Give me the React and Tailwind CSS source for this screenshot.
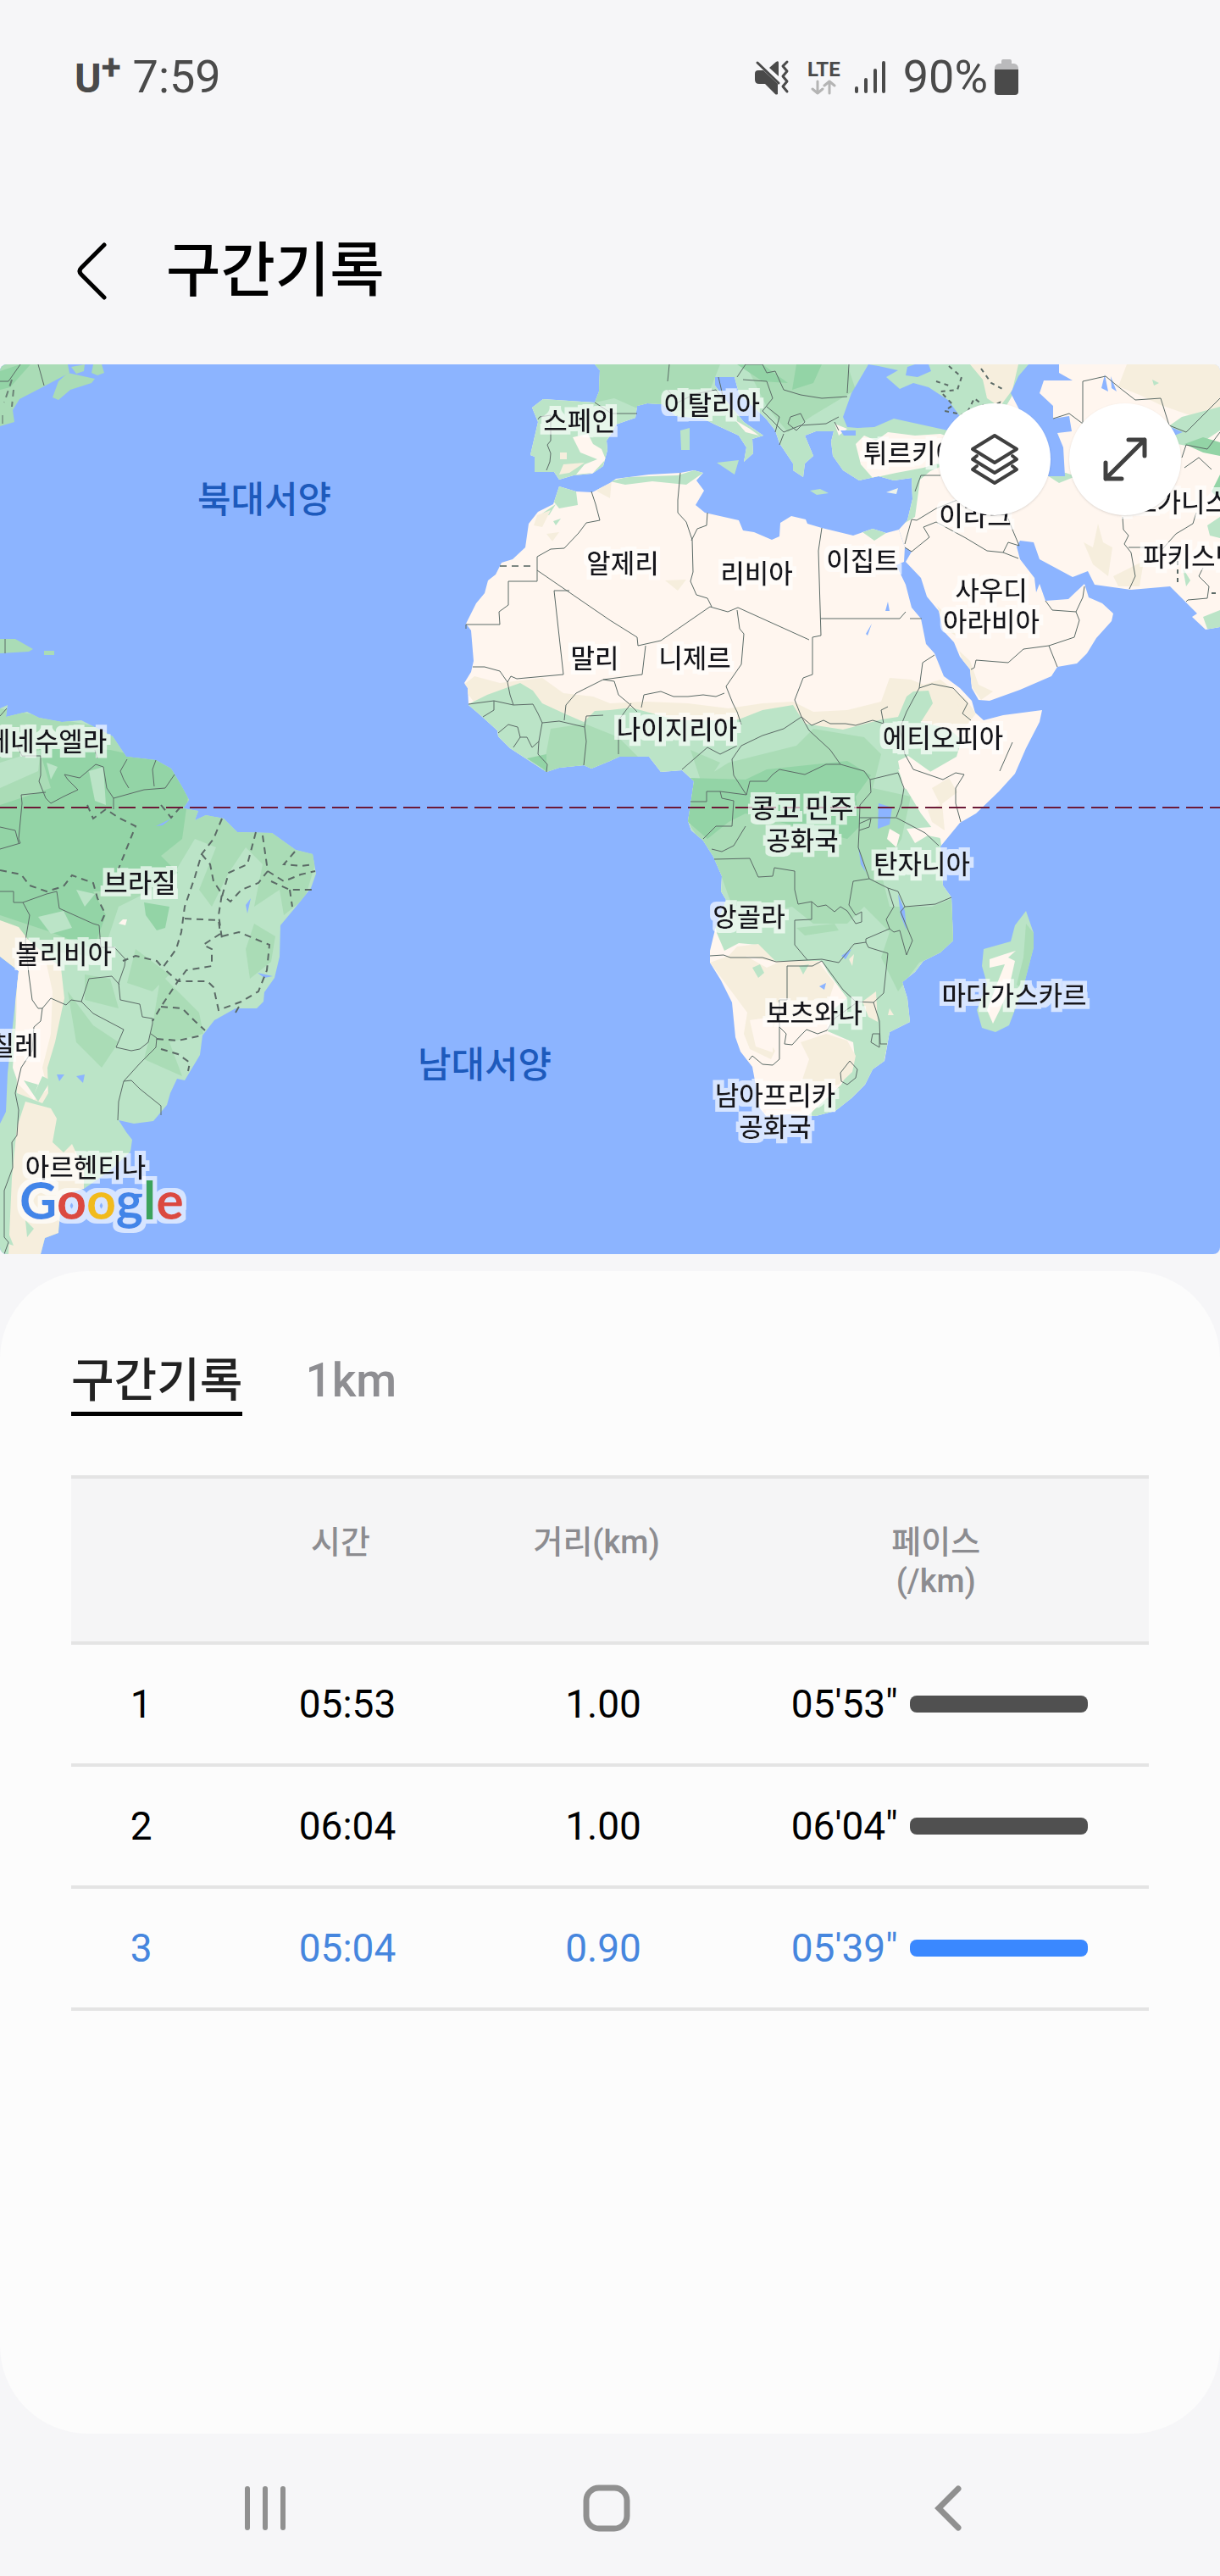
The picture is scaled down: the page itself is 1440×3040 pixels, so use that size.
const KR = "font-['Roboto','Noto_Sans_CJK_KR',sans-serif]";

const laps = [
    {no: 1, time: "05:53", distance: "1.00", pace: "05'53\"", current: false},
    {no: 2, time: "06:04", distance: "1.00", pace: "06'04\"", current: false},
    {no: 3, time: "05:04", distance: "0.90", pace: "05'39\"", current: true},
];

// x and y are the centre of the label in map units
const labels = [
    {text: "스페인", x: 684, y: 66},
    {text: "이탈리아", x: 840, y: 47},
    {text: "튀르키예", x: 1076, y: 104},
    {text: "이라크", x: 1151, y: 178},
    {text: "아프가니스탄", x: 1394, y: 162},
    {text: "파키스탄", x: 1406, y: 226},
    {text: "알제리", x: 735, y: 234},
    {text: "리비아", x: 893, y: 246},
    {text: "이집트", x: 1018, y: 231},
    {text: "사우디", x: 1170, y: 266},
    {text: "아라비아", x: 1170, y: 303},
    {text: "말리", x: 702, y: 346},
    {text: "니제르", x: 820, y: 346},
    {text: "나이지리아", x: 799, y: 430},
    {text: "에티오피아", x: 1113, y: 440},
    {text: "베네수엘라", x: 55, y: 444},
    {text: "브라질", x: 165, y: 611},
    {text: "볼리비아", x: 75, y: 695},
    {text: "칠레", x: 17, y: 803},
    {text: "아르헨티나", x: 101, y: 947},
    {text: "콩고 민주", x: 947, y: 523},
    {text: "공화국", x: 947, y: 561},
    {text: "탄자니아", x: 1088, y: 589},
    {text: "앙골라", x: 884, y: 651},
    {text: "보츠와나", x: 961, y: 765},
    {text: "마다가스카르", x: 1197, y: 744},
    {text: "남아프리카", x: 915, y: 862},
    {text: "공화국", x: 915, y: 899},
];

function StatusBar() {
    return (
        <div className="flex items-center justify-between pt-14 pl-[88px] pr-[238px] text-[#4a4a4a]">
            <div className="flex items-center gap-3.5">
                <div className="flex items-start text-5xl leading-[60px] font-bold">
                    <span className="pt-1">U</span>
                    <span className="text-[42px] leading-[42px]">+</span>
                </div>
                <time className="text-[54px] leading-[70px]">7:59</time>
            </div>
            <div className="flex items-center">
                <svg width="42" height="42" viewBox="0 0 42 42" fill="currentColor" role="img" aria-label="진동">
                    <path d="M0 17Q0 13 4 13H10L27 29V41Q25 42 24 41L12 29H5Q0 29 0 24Z"/>
                    <path d="M17 10L25 3Q28 1 28 4V20Z"/>
                    <path d="M3 4L28 28" fill="none" stroke="currentColor" strokeWidth="3" strokeLinecap="round"/>
                    <path d="M38 3L33 8L38 14L33 20L38 26L33 32L38 38" fill="none" stroke="currentColor"
                          strokeWidth="3" strokeLinecap="round" strokeLinejoin="round"/>
                </svg>
                <div className="ml-5 flex flex-col items-center">
                    <span className="text-2xl leading-6 font-bold">LTE</span>
                    <svg width="30" height="18" viewBox="0 0 30 18" fill="none" stroke="#b4b4b4" strokeWidth="3"
                         strokeLinecap="round" strokeLinejoin="round" aria-hidden="true">
                        <path d="M8 2V16M2 11L8 16L14 11"/>
                        <path d="M22 16V2M16 7L22 2L28 7"/>
                    </svg>
                </div>
                <svg className="ml-4" width="38" height="42" viewBox="0 0 38 42" stroke="currentColor" strokeWidth="4"
                     strokeLinecap="round" role="img" aria-label="신호">
                    <path d="M3 34V38M14 24V38M25 13V38M35 4V38"/>
                </svg>
                <span className="ml-5 text-[54px] leading-[70px]">90%</span>
                <svg className="ml-2" width="28" height="44" viewBox="0 0 28 44" aria-hidden="true">
                    <path d="M8 6V3Q8 1 10 1H18Q20 1 20 3V6H23Q28 7 28 12V20H0V12Q0 7 5 6Z" fill="#bababc"/>
                    <path d="M0 13H28V39Q28 43 24 43H4Q0 43 0 39Z" fill="currentColor"/>
                </svg>
            </div>
        </div>
    );
}

function Header() {
    return (
        <header className="flex items-center gap-[70px] pt-[154px] pb-[70px] pl-[90px]">
            <button type="button" aria-label="뒤로">
                <svg width="36" height="68" viewBox="0 0 36 68" fill="none" stroke="#000" strokeWidth="5"
                     strokeLinecap="round" strokeLinejoin="round">
                    <path d="M33 3L6 30Q2 34 6 38L33 65"/>
                </svg>
            </button>
            <h1 className="text-[70px] leading-[80px] font-medium text-black">구간기록</h1>
        </header>
    );
}

function WorldMap() {
    return (
        <svg viewBox="0 0 1440 1050" className="block w-full" role="img" aria-label="지도">
            <defs>
                <filter id="halo" x="-20%" y="-40%" width="140%" height="180%">
                    <feMorphology in="SourceAlpha" operator="dilate" radius="5" result="wide"/>
                    <feFlood floodColor="#fff" floodOpacity="0.65"/>
                    <feComposite in2="wide" operator="in" result="glow"/>
                    <feMerge>
                        <feMergeNode in="glow"/>
                        <feMergeNode in="SourceGraphic"/>
                    </feMerge>
                </filter>
                <clipPath id="africa-clip">
                    <path d="M660 144L680 150 699 151 720 140 727 135 766 130 803 128 819 125 830 128 822 137 831 149 821 166 832 175 872 184 877 196 890 198 911 207 920 203 921 187 934 179 951 183 953 188 970 193 1007 202 1030 194 1046 199 1061 195 1068 216 1067 233 1058 237 1069 260 1076 287 1087 300 1093 330 1103 341 1114 368 1133 382 1147 397 1151 411 1161 420 1184 414 1230 408 1227 422 1211 453 1198 483 1179 504 1152 530 1133 541 1110 569 1113 615 1123 629 1125 680 1110 694 1090 704 1080 717 1065 729 1071 748 1074 776 1050 788 1044 822 1030 832 1021 850 1005 866 986 881 963 887 931 885 904 887 897 878 888 829 874 811 868 794 864 753 851 727 838 706 838 692 844 667 857 632 851 622 852 604 842 581 830 562 816 550 812 539 815 520 819 492 805 479 780 481 766 463 731 463 720 468 698 477 689 473 660 476 645 481 602 453 588 439 587 432 567 414 553 402 552 382 548 376 556 363 559 350 556 314 550 306 562 282 572 270 576 255 585 248 592 234 605 230 620 216 624 188 635 174 653 165Z"/>
                </clipPath>
                <clipPath id="america-clip">
                    <path d="M0 406L9 402 7 416 32 410 46 417 73 422 96 420 133 439 149 463 184 467 202 477 214 497 223 514 216 524 234 527 230 538 243 532 264 536 280 552 321 553 349 573 369 578 373 601 367 618 351 638 331 662 330 699 324 724 312 741 311 752 303 760 278 760 253 774 239 792 236 815 218 845 209 843 201 860 197 874 181 893 158 896 140 892 149 906 156 915 154 929 129 952 99 973 73 980 69 1025 53 1031 48 1050 0 1050 0 896 7 882 9 836 17 762 22 716 0 699Z"/>
                </clipPath>
                <clipPath id="eurasia-clip">
                    <path d="M702 0L708 7 707 32 702 45 641 41 628 51 635 68 626 107 631 109 631 127 654 127 660 136 677 131 699 129 712 120 717 101 716 90 722 81 727 71 750 63 752 49 764 46 782 47 798 61 830 64 844 71 872 84 881 98 878 115 889 105 888 88 901 84 878 68 858 44 844 25 844 15 867 15 872 34 904 64 915 78 920 93 936 117 936 125 948 133 950 117 960 108 950 84 963 79 984 79 981 91 983 108 995 125 1014 137 1037 132 1055 137 1076 134 1077 159 1071 184 1061 195 1068 216 1076 221 1069 233 1087 252 1094 274 1108 291 1113 314 1126 328 1133 345 1145 360 1147 382 1155 396 1168 397 1204 384 1241 368 1248 357 1271 353 1283 341 1294 323 1312 303 1314 294 1301 282 1285 275 1280 259 1261 277 1234 279 1227 259 1223 269 1221 252 1204 230 1200 215 1204 208 1220 210 1227 230 1266 251 1284 244 1292 260 1335 266 1381 262 1400 281 1413 294 1407 298 1423 313 1440 310V0Z"/>
                </clipPath>
            </defs>

            <rect width="1440" height="1050" fill="#8cb4ff"/>

            {/* North America and the Caribbean */}
            <g fill="#aadcb6">
                <path d="M0 0H80L82 10 50 27 23 41 15 54 17 68 0 73Z"/>
                <path d="M80 10L112 17 108 22 83 30 69 42 62 39 69 20Z"/>
                <path d="M84 3L100 0 99 8 90 11ZM110 0H120L123 10 115 13 108 10Z"/>
                <path d="M0 324H18L39 336 34 339 0 341ZM52 338H64V343H52Z"/>
            </g>
            <path d="M0 8L24 0H36L12 27 0 30Z" fill="#93d4a6"/>

            {/* Europe, the Middle East and Asia */}
            <g clipPath="url(#eurasia-clip)">
                <rect x="600" width="840" height="420" fill="#fff6ef"/>
                <path d="M600 0H1214L1193 40 1180 62 1160 76 1145 90 1130 112 1098 126 1086 136 1080 180 1060 192 900 140 780 60 722 90 710 125 655 140 620 130Z" fill="#bbe4c7"/>
                <path d="M680 0H850L830 50 770 60 725 40 702 45ZM880 0H1000L1010 30 960 60 930 80 905 50Z" fill="#aadcb6"/>
                <path d="M870 0H900L930 22 900 20ZM940 0H970L960 22 935 30Z" fill="#93d4a6"/>
                <path d="M676 86L694 82 700 94 710 100 715 112 700 128 680 130 690 118 705 112 685 104Z" fill="#fff6ef"/>
                <path d="M665 118L690 116 672 128 660 130ZM661 104H669V112H661Z" fill="#f6eedd"/>
                <path d="M1010 94L1020 84 1034 90 1048 80 1080 84 1110 82 1140 92 1130 110 1090 122 1058 128 1030 134 1016 118ZM985 70L1000 76 990 84Z" fill="#fff6ef"/>
                <path d="M1145 0H1202L1195 30 1180 50 1165 40 1160 18Z" fill="#f6eedd"/>
                <path d="M868 66L885 76 896 84 880 80Z" fill="#fff6ef"/>
                <path d="M1236 131L1258 128 1270 132 1250 140Z" fill="#bbe4c7"/>
                <path d="M1330 0H1440V56L1410 62 1370 48 1345 36 1320 26Z" fill="#f6eedd"/>
                <path d="M1360 18L1368 22 1362 25ZM1378 74L1395 62 1440 50V78L1425 88 1400 96 1380 92Z" fill="#bbe4c7"/>
                <path d="M1398 94L1420 86 1440 92V108L1420 104ZM1440 130L1430 150 1440 160Z" fill="#93d4a6"/>
                <path d="M1296 188L1302 210 1313 216 1308 250 1290 236 1279 210 1290 216ZM1314 250L1350 232 1345 262 1320 262Z" fill="#f6eedd"/>
                <path d="M1425 190L1440 180V205L1428 202ZM1396 240L1405 255 1400 262ZM1420 298L1440 290V312L1425 312Z" fill="#bbe4c7"/>
                <path d="M1132 338L1145 350 1155 378 1172 386 1158 396 1148 382ZM1106 285L1118 296 1128 320 1115 312Z" fill="#f6eedd"/>
            </g>
            <g fill="#8cb4ff">
                <path d="M1018 12L1005 34 995 62 1000 74 1012 75 1032 74 1055 64 1087 71 1119 78 1135 64 1119 42 1096 27 1078 22 1062 29 1046 15 1060 7 1037 2 1025 0Z"/>
                <path d="M1071 3L1080 0H1096L1099 8 1083 15 1069 13Z"/>
                <path d="M1214 0H1250V10L1266 19 1232 19 1227 34 1243 49 1243 64 1262 61 1265 79 1248 81 1255 98 1257 132 1237 132 1220 101 1207 61 1193 34 1202 14Z"/>
                <path d="M992 78H1010V84H996ZM1300 28L1304 12 1308 32ZM1311 14L1318 32 1312 28ZM1382 74L1396 80 1386 84Z"/>
            </g>
            <g fill="#bbe4c7">
                <path d="M803 78L814 75V101L804 101ZM846 116L872 113 867 130ZM956 149L968 147 978 152 964 154Z"/>
                <path d="M1046 151L1060 146 1058 153Z" fill="#eef3ea"/>
                <path d="M1211 645L1220 671V688L1207 738 1191 780 1175 788 1159 783 1153 762 1165 731 1159 710 1161 690 1193 681 1198 662Z"/>
            </g>
            <path d="M1211 660L1220 671V688L1207 738 1200 732 1208 700Z" fill="#aadcb6"/>
            <path d="M1168 702L1186 696 1199 692 1190 700 1198 704 1190 740 1180 762 1172 778 1165 762 1178 728 1186 708 1168 712Z" fill="#fff6ef"/>

            {/* Africa */}
            <g clipPath="url(#africa-clip)">
                <rect x="540" y="120" width="700" height="780" fill="#fff6ef"/>
                <path d="M655 140L680 150 682 166 660 170 652 160ZM640 176L656 165 648 178ZM653 185L662 182 656 190Z" fill="#bbe4c7"/>
                <path d="M720 138L740 133 800 131 822 124 830 128 810 142 770 138 738 142Z" fill="#bbe4c7"/>
                <path d="M1018 198L1030 192 1046 199 1032 208Z" fill="#bbe4c7"/>
                <path d="M706 140L722 136 720 158 705 150ZM634 178L650 172 640 192 630 190ZM645 200L660 198 652 209ZM785 255L810 254 800 267Z" fill="#f6eedd"/>
                <path d="M545 380L560 368 590 376 640 370 665 388 700 392 720 400 760 398 812 400 860 406 900 400 936 398 960 410 1000 408 1040 398 1050 370 1075 372 1090 378 1110 372 1140 395 1152 412 1130 440 1060 450 600 450Z" fill="#f6eedd"/>
                <path d="M553 401L575 390 597 382 614 376 629 385 640 400 666 412 689 422 702 409 720 408 745 405 800 420 850 420 872 419 900 408 936 402 950 424 995 431 1041 419 1060 416 1070 392 1078 386 1096 385 1101 400 1087 422 1120 430 1135 443 1129 463 1096 482 1060 478 1069 500 1087 530 1110 560 1115 600 1140 640 1120 700 1080 720 1080 780 1050 790 1040 840 986 890 950 890 993 850 1009 818 1007 800 977 787 985 760 1000 748 977 717 970 704 913 704 894 685 872 683 855 692 846 671 830 600 800 500 600 480 540 420Z" fill="#bbe4c7"/>
                <path d="M650 430L690 424 730 440 760 470 700 480 640 484ZM860 470L940 450 960 430 1020 440 1040 460 1030 500 1075 510 1064 560 1040 600 1050 640 1100 640 1125 630 1125 690 1085 706 1060 740 1040 700 1050 670 1020 640 1000 660 960 660 935 640 870 655 850 600 815 545 812 500ZM940 665L985 660 990 668 950 674ZM815 455L850 470 830 500Z" fill="#aadcb6"/>
                <path d="M812 488L880 490 905 478 1000 468 1028 485 1010 510 1015 545 1000 560 880 530 860 540 835 560 812 540ZM622 465L645 460 645 480Z" fill="#93d4a6"/>
                <path d="M1060 468L1072 462 1100 482 1130 480 1145 494 1150 512 1132 540 1100 530 1085 505 1066 500ZM1050 548L1062 555 1058 570 1047 560ZM1070 548L1100 546 1115 560 1095 556 1080 565Z" fill="#fff6ef"/>
                <path d="M1100 500L1120 488 1130 505 1110 520ZM1095 526L1112 518 1115 550 1100 540ZM1120 420L1128 400 1140 410Z" fill="#f6eedd"/>
                <path d="M870 687L895 684 915 704 965 704 985 730 975 760 960 775 920 770 905 795 915 810 910 820 885 808 878 790 882 765 850 722 838 706 860 698ZM975 790L1000 798 1010 816 1006 835 990 850 960 856 945 850 955 820 945 800Z" fill="#f6eedd"/>
                <path d="M880 698L918 706 905 712ZM885 774L912 770 912 812 892 805Z" fill="#fff6ef"/>
                <path d="M888 712L897 708 902 718 895 724ZM943 710L955 708 948 720Z" fill="#bbe4c7"/>
                <path d="M1018 752L1034 740 1036 776 1025 770ZM1050 760L1055 768H1048ZM1002 702L1008 696 1006 710Z" fill="#f6eedd"/>
            </g>
            <path d="M1037 518L1053 523 1050 543 1036 548ZM1013 568L1022 600 1026 606 1016 590ZM1060 625L1068 645 1070 668 1063 650ZM993 698L1005 690 998 702ZM967 734L975 730 973 738ZM1048 280L1050 291H1045ZM1022 318L1029 306 1024 320Z" fill="#8cb4ff"/>

            {/* South America */}
            <g clipPath="url(#america-clip)">
                <rect y="400" width="380" height="650" fill="#bbe4c7"/>
                <path d="M0 406L130 430 240 520 320 550 375 580 360 630 335 650 330 620 300 640 310 590 290 570 270 600 250 640 235 620 255 570 230 560 200 610 140 640 120 700 40 690 0 660Z" fill="#aadcb6"/>
                <path d="M45 450L130 455 200 470 222 510 215 560 190 580 210 600 175 620 110 622 125 650 110 690 60 670 0 650V520L60 500ZM170 635L200 640 195 665 185 668 172 650Z" fill="#93d4a6"/>
                <path d="M0 470L48 455 45 480 0 500ZM105 480L122 475 125 520 112 515 108 495ZM55 470L68 475 60 490ZM90 620L112 625 100 640ZM45 652L75 645 85 665 60 672Z" fill="#bbe4c7"/>
                <path d="M300 660L325 675 320 705 295 725 290 690ZM160 690L200 720 180 740 150 730ZM80 740L110 780 140 800 120 830 90 800ZM190 720L235 765 240 790 200 800 215 840 170 820 180 780ZM100 720L130 725 140 760 100 750Z" fill="#aadcb6"/>
                <path d="M0 656L22 664 34 680 72 712 76 748 65 800 56 830 57 860 50 872 20 860 18 740 22 716 0 699Z" fill="#f6eedd"/>
                <path d="M20 700L55 708 62 740 60 790 50 830 56 856 40 868 22 850 15 830 20 760Z" fill="#fff6ef"/>
                <path d="M30 870L60 878 67 890 62 918 75 930 85 920 99 950 99 973 73 980 69 1025 48 1050H10L14 960 20 900Z" fill="#f6eedd"/>
                <path d="M28 845L45 850 40 862 50 840 60 845 45 870ZM30 1010L40 1020 32 1030ZM8 1020L16 1040 4 1036Z" fill="#bbe4c7"/>
                <path d="M145 655L150 655 148 662 140 660Z" fill="#fff6ef"/>
            </g>
            <path d="M67 838L76 838 70 846ZM90 840L100 838 98 848ZM290 638L296 630 292 648ZM304 718L322 722 312 724ZM184 545L202 536 192 544Z" fill="#8cb4ff"/>

            {/* Country borders */}
            <g fill="none" stroke="#5b6a66" strokeWidth="1">
                <path d="M698 150L703 165 708 184 692 187 683 199 666 217 650 218 634 227V256H600V284L589 292 590 307H550V312"/>
                <path d="M634 243L720 302 752 322 753 332 780 326 838 286 859 292 871 287 955 325"/>
                <path d="M672 267H654L665 366 610 371 603 368 599 375 590 362 572 357 558 357"/>
                <path d="M599 375L602 390 606 402 629 401 635 412 640 423 660 421 690 428 692 415 712 414M553 401L583 397 606 402M583 397V408L570 416M588 435L600 425 611 428 614 440 606 452M614 440L622 440 628 452 636 445 640 423M636 445L635 460 646 472 645 481M690 428L692 445 689 473"/>
                <path d="M666 420L668 402 680 388 712 372 758 366 762 332M712 372L725 374 730 390 742 400 752 410M730 460V420L745 400M757 405L760 390 780 386 795 392 812 392 830 390 845 392 855 388"/>
                <path d="M803 128L800 160 800 175 810 186 817 207 818 245 815 256 822 272 835 276 840 286M835 175L834 190 823 194 816 208"/>
                <path d="M970 193L966 220 969 320 959 322V366L948 370 938 396 946 416M870 290L873 312 878 318 875 354 857 380 865 400 870 410 875 425"/>
                <path d="M969 300H1062L1069 292M1074 300H1088M1103 343L1089 352 1085 382 1070 410 1062 430 1068 460 1078 478"/>
                <path d="M1085 382L1100 377 1125 382 1142 400 1136 412 1146 420M1078 478L1113 490 1128 482 1138 484 1128 500V518L1134 540M1195 446L1180 480M1048 404L1040 408 1043 424 1030 420 1010 426 998 424 980 424 972 420 958 426 946 416 925 430 900 438 875 450 864 466 866 485 881 508"/>
                <path d="M946 416L955 432 980 455 992 472 1020 480 1027 490 1060 482 1067 500 1064 518 1058 534M992 472L975 472 950 484 920 478 912 484 905 492 885 492 881 508 850 504 834 504V516H815M850 504L852 512 866 515 864 545 845 545 830 560M870 450L850 460 835 452 805 478"/>
                <path d="M1027 490L1028 505 1015 520 1014 550 1013 570 1026 607 1048 618 1060 622 1068 640 1104 637 1123 629M1014 550L1026 546 1028 536 1014 542M1015 535H1058L1092 553 1108 568M840 572L852 575 866 568 880 545"/>
                <path d="M843 584L885 583 895 605 912 604 914 594 938 598V620L942 637 958 634 965 640 975 638 985 646 992 640 1000 645 1010 660 1017 658V646L1010 650 1002 638 1007 610 1026 607M958 634V655L938 656V685L953 703"/>
                <path d="M838 698L854 697 862 700 900 700 916 705 970 702 990 706 1008 684 1022 682V678L1050 666 1046 655 1055 640 1048 618M1050 666L1055 670 1062 668 1070 697 1077 680 1063 646 1068 640"/>
                <path d="M1022 682L1025 688 1048 695 1043 742 1031 753 1010 752 995 738 970 704M929 710V750H920V820L912 827 900 826 888 816 884 821M929 710L959 710 970 704M920 782L928 790 926 802 935 803 945 792 952 785 965 790 976 786 985 772 1010 754M1031 753L1038 775 1039 802 1047 802M1038 790L1030 790 1028 800 1038 806ZM1003 822L992 836 993 846 1000 850 1010 842 1012 832Z"/>
                <path d="M635 65L637 62 650 60 650 90 646 95 650 105 649 115 645 125M702 45L722 58 752 58M788 20L790 0M788 30L800 45 820 35 845 30 855 45 848 15M870 15L880 0H900L905 10 915 8 925 30 945 36 970 40 1000 38M877 18L905 20 912 40 900 55 915 70 925 80 945 72 975 70 990 62M905 50L920 62 915 80M933 62L945 58 950 68 940 78 930 70ZM920 95L925 82M1000 34L1002 0M985 68L990 78"/>
                <path d="M1087 131H1110M1087 131L1080 150M1076 183L1082 184 1105 170 1130 160M1076 183L1068 212M1068 216L1076 221 1097 204 1090 192 1105 186 1140 205 1165 220 1184 222 1202 229M1184 222L1190 210 1203 214M1203 214L1195 195 1190 182M1234 279L1242 290 1270 292 1278 275 1280 262M1270 292L1274 302 1268 322 1238 332 1208 336 1190 352 1152 349 1150 358 1146 360M1238 332L1248 357"/>
                <path d="M1278 70V20L1305 14 1322 28 1340 42 1370 40 1380 72 1400 80 1440 40M1243 64L1262 58 1278 70M1325 180L1326 195 1332 202 1327 212 1335 222 1340 250 1333 265M1332 216L1370 216M1372 218L1388 200 1408 188 1412 175M1400 280L1402 278 1425 276 1427 262 1415 250 1420 240M1395 110L1400 95 1425 100 1440 80M1398 122L1415 110 1430 124"/>
                <path d="M0 20H10L24 0M45 0L52 25M3 60V70M6 324V341M0 415L8 406M20 450L26 462H48V485L46 492 54 512 60 518 75 510 92 502 80 490 76 484 94 488 113 472 122 475 126 500 134 512V525M115 465L112 455M150 466L142 480 146 490 152 500M184 467L180 478 182 498M206 484L195 500 170 502 134 512M54 505L25 508 26 518 22 560 24 565 0 572M0 546L18 550 22 565"/>
                <path d="M0 622L16 622V635H27L55 625 67 622 70 642 110 660 117 662 119 688H135L148 702 147 710 140 730 142 750 165 755 168 770 180 772V778L175 800 165 808 155 810 137 806 146 785 110 766 96 752 105 725 132 722 141 732M27 635L35 650 30 680 34 720 38 750 45 760H50L60 748 78 756 84 750 96 752M50 760L48 775 40 782 38 810 25 830 18 860 22 880 20 910 14 918 15 948 5 975V1030L10 1036 5 1050M178 790L185 795 184 806 165 825 146 846 140 870 139 892M146 846L155 845 165 855 190 875V886"/>
            </g>
            {/* State borders */}
            <g fill="none" stroke="#5b6a66" strokeWidth="2" strokeDasharray="8 6">
                <path d="M103 520L110 536 125 525 140 535 160 545 140 595M0 597L25 602 35 615 55 622 75 616 85 603 110 612 115 630 124 648 118 662M190 520L202 535 215 520M262 536L252 560 238 578 230 605 218 640 214 670 208 690 192 712 185 704 160 698 145 704M238 578L248 590 252 610 262 625 258 650 262 678M302 552L292 590 270 600 262 628M310 556L316 598 305 612 285 620 272 634 262 626M348 575L335 590 355 592 370 590M316 598L335 610 355 602 372 598M320 610L342 620H370M342 620L345 640M218 654L258 656 260 672 240 685 250 690V710L220 715 210 728 192 712M262 675L282 670 318 685 315 715 305 740 285 752 258 762 252 735 245 728 210 728 190 758 180 775M190 758L215 760 230 775 242 786M185 796L210 798 238 792M190 808L210 814 224 824 222 834M278 765L282 758"/>
                <path d="M14 18L5 45M16 30L14 50M590 238H630" opacity="0.8"/>
                <path d="M1120 2L1135 15 1130 30 1110 32 1125 48 1115 55 1140 60 1150 40 1165 52 1180 45 1175 62M1158 5L1170 22 1185 30M1105 20L1120 25M1390 232V262M1430 270H1440" strokeDasharray="5 5"/>
            </g>
            <path d="M0 523H1440" stroke="#6d1a38" strokeWidth="2" strokeDasharray="20 8"/>

            <g className="font-['Noto_Sans_CJK_KR',sans-serif] font-medium" textAnchor="middle">
                <g fontSize="31" fill="#16191c" filter="url(#halo)">
                    {labels.map((label) => (
                        <text key={`${label.text}-${label.y}`} x={label.x} y={label.y + 12}>{label.text}</text>
                    ))}
                </g>
                <g fontSize="43" fill="#1d5abc">
                    <text x="312" y="175">북대서양</text>
                    <text x="572" y="842">남대서양</text>
                </g>
            </g>

            <text x="23" y="1009" fontSize="61" className="font-['Lato',sans-serif] font-bold" filter="url(#halo)">
                <tspan fill="#4285e8">G</tspan>
                <tspan fill="#db4a3f">o</tspan>
                <tspan fill="#f1bb1b">o</tspan>
                <tspan fill="#4285e8">g</tspan>
                <tspan fill="#3aa35b">l</tspan>
                <tspan fill="#db4a3f">e</tspan>
            </text>
        </svg>
    );
}

function MapPanel() {
    return (
        <section className="relative overflow-hidden rounded-lg">
            <WorldMap/>
            <div className="absolute top-[46px] right-[46px] flex gap-[22px]">
                <button type="button" aria-label="지도 유형"
                        className="flex size-[132px] items-center justify-center rounded-full bg-white text-[#404040] shadow-sm">
                    <svg width="60" height="62" viewBox="0 0 60 62" fill="none" stroke="currentColor" strokeWidth="4"
                         strokeLinecap="round" strokeLinejoin="round">
                        <path d="M30 3L56 19L30 35L4 19Z"/>
                        <path d="M9 27L4 31L30 47L56 31L51 27"/>
                        <path d="M9 39L4 43L30 59L56 43L51 39"/>
                    </svg>
                </button>
                <button type="button" aria-label="지도 확대"
                        className="flex size-[132px] items-center justify-center rounded-full bg-white text-[#404040] shadow-sm">
                    <svg width="56" height="56" viewBox="0 0 56 56" fill="none" stroke="currentColor" strokeWidth="5"
                         strokeLinecap="round" strokeLinejoin="round">
                        <path d="M5 51L51 5M32 5H51V24M5 32V51H24"/>
                    </svg>
                </button>
            </div>
        </section>
    );
}

function LapTable() {
    return (
        <table className="w-full table-fixed border-collapse text-center">
            <colgroup>
                <col className="w-[13%]"/>
                <col className="w-[24%]"/>
                <col className="w-[23.5%]"/>
                <col className="w-[39.5%]"/>
            </colgroup>
            <thead>
            <tr className="border-y-4 border-[#e4e4e4] bg-[#f5f5f6] align-top text-[38px] leading-[46px] text-[#8c8c90]">
                <th className="pt-[52px] pb-12" aria-label="구간"></th>
                <th className="pt-[52px] pb-12 font-medium">시간</th>
                <th className="pt-[52px] pb-12 font-medium">거리(km)</th>
                <th className="pt-[52px] pb-12 font-medium">페이스<br/>(/km)</th>
            </tr>
            </thead>
            <tbody>
            {laps.map((lap) => (
                <tr key={lap.no}
                    className={`h-36 border-b-4 border-[#e4e4e4] text-[46px] leading-[60px] ${lap.current ? 'text-[#4686de]' : 'text-black'}`}>
                    <td>{lap.no}</td>
                    <td className="pl-4">{lap.time}</td>
                    <td className="pl-4">{lap.distance}</td>
                    <td>
                        <div className="flex items-center justify-center gap-3.5 pl-2">
                            <span>{lap.pace}</span>
                            <span className={`h-5 w-[210px] rounded-lg ${lap.current ? 'bg-[#3a88ff]' : 'bg-[#505050]'}`}/>
                        </div>
                    </td>
                </tr>
            ))}
            </tbody>
        </table>
    );
}

function NavBar() {
    return (
        <nav className="grid h-[168px] grid-cols-3 items-center justify-items-center pt-2 pl-28 pr-[120px] text-[#909090]">
            <button type="button" aria-label="최근 앱">
                <svg width="50" height="56" viewBox="0 0 50 56" stroke="currentColor" strokeWidth="6"
                     strokeLinecap="round">
                    <path d="M4 5V51M25 5V51M46 5V51"/>
                </svg>
            </button>
            <button type="button" aria-label="홈">
                <svg width="58" height="58" viewBox="0 0 58 58" fill="none" stroke="currentColor" strokeWidth="7">
                    <rect x="5" y="5" width="48" height="48" rx="15"/>
                </svg>
            </button>
            <button type="button" aria-label="뒤로 가기">
                <svg width="34" height="56" viewBox="0 0 34 56" fill="none" stroke="currentColor" strokeWidth="7"
                     strokeLinecap="round">
                    <path d="M29 5L6 28L29 51"/>
                </svg>
            </button>
        </nav>
    );
}

export default function App() {
    return (
        <div className={`flex min-h-screen flex-col bg-[#f6f6f8] ${KR}`}>
            <StatusBar/>
            <Header/>
            <MapPanel/>
            <main className="mt-5 flex-1 rounded-[104px] bg-[#fcfcfc] px-[84px] pt-24">
                <div className="flex items-start gap-[74px] text-[55px] leading-[66px] font-medium">
                    <button type="button" className="border-b-[5px] border-black pb-1 text-[#222]">구간기록</button>
                    <button type="button" className="text-[#8e8e92]">1km</button>
                </div>
                <div className="mt-[70px]">
                    <LapTable/>
                </div>
            </main>
            <NavBar/>
        </div>
    );
}
